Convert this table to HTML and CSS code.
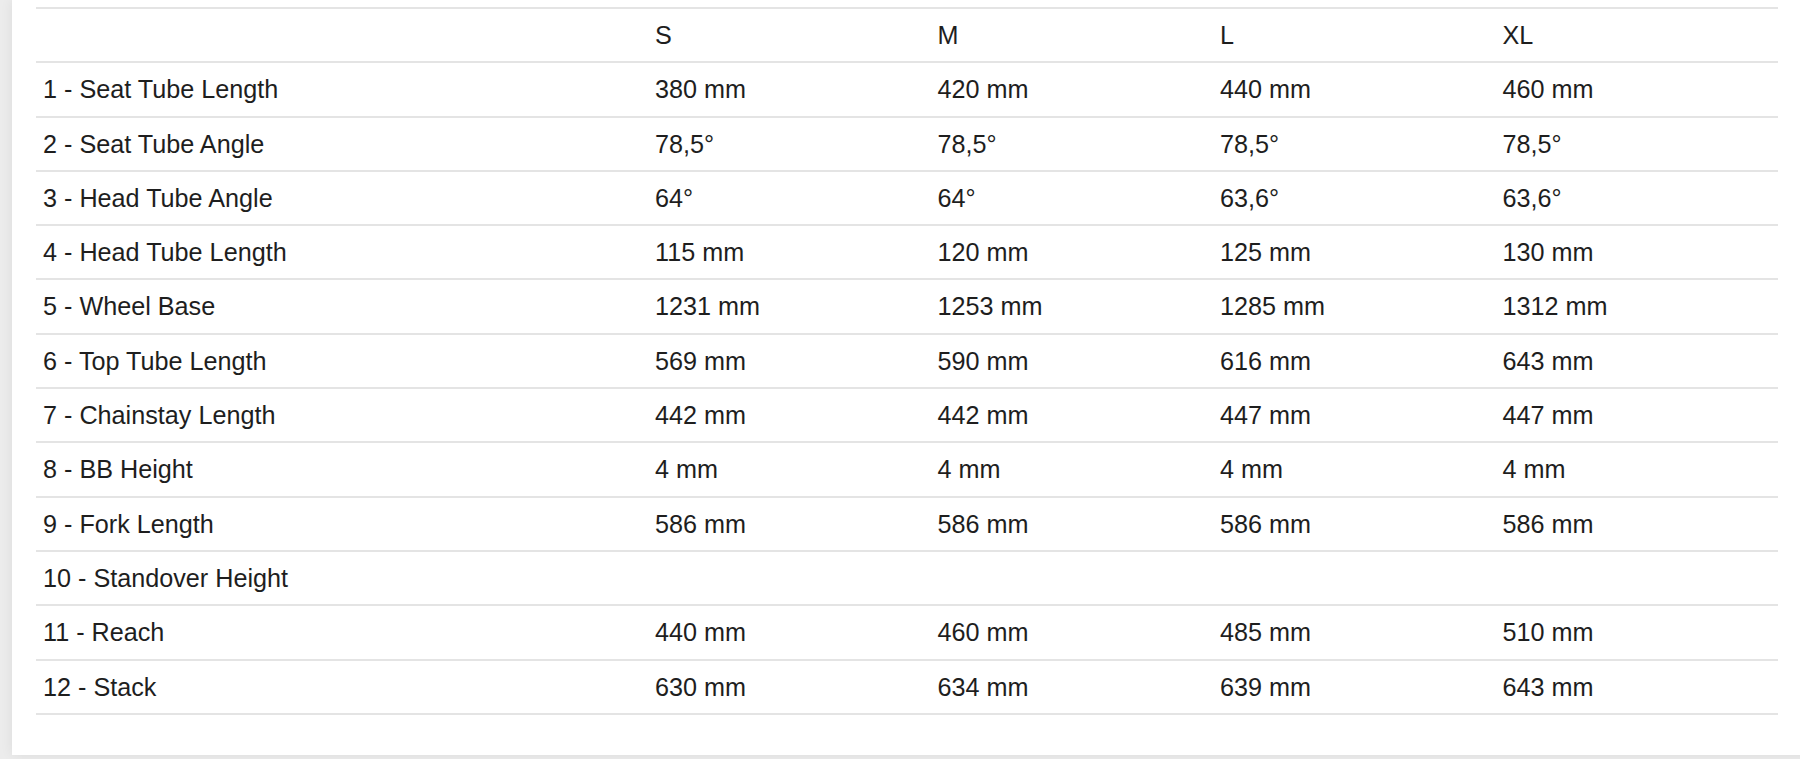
FILE: index.html
```html
<!DOCTYPE html>
<html>
<head>
<meta charset="utf-8">
<link rel="stylesheet" href="styles.css">
</head>
<body>
<div class="card">
  <table class="geo">
    <colgroup>
      <col class="c-label">
      <col class="c-size"><col class="c-size"><col class="c-size"><col class="c-size">
    </colgroup>
    <thead>
      <tr><th></th><th>S</th><th>M</th><th>L</th><th>XL</th></tr>
    </thead>
    <tbody>
      <tr><td>1 - Seat Tube Length</td><td>380 mm</td><td>420 mm</td><td>440 mm</td><td>460 mm</td></tr>
      <tr><td>2 - Seat Tube Angle</td><td>78,5°</td><td>78,5°</td><td>78,5°</td><td>78,5°</td></tr>
      <tr><td>3 - Head Tube Angle</td><td>64°</td><td>64°</td><td>63,6°</td><td>63,6°</td></tr>
      <tr><td>4 - Head Tube Length</td><td>115 mm</td><td>120 mm</td><td>125 mm</td><td>130 mm</td></tr>
      <tr><td>5 - Wheel Base</td><td>1231 mm</td><td>1253 mm</td><td>1285 mm</td><td>1312 mm</td></tr>
      <tr><td>6 - Top Tube Length</td><td>569 mm</td><td>590 mm</td><td>616 mm</td><td>643 mm</td></tr>
      <tr><td>7 - Chainstay Length</td><td>442 mm</td><td>442 mm</td><td>447 mm</td><td>447 mm</td></tr>
      <tr><td>8 - BB Height</td><td>4 mm</td><td>4 mm</td><td>4 mm</td><td>4 mm</td></tr>
      <tr><td>9 - Fork Length</td><td>586 mm</td><td>586 mm</td><td>586 mm</td><td>586 mm</td></tr>
      <tr><td>10 - Standover Height</td><td></td><td></td><td></td><td></td></tr>
      <tr><td>11 - Reach</td><td>440 mm</td><td>460 mm</td><td>485 mm</td><td>510 mm</td></tr>
      <tr><td>12 - Stack</td><td>630 mm</td><td>634 mm</td><td>639 mm</td><td>643 mm</td></tr>
    </tbody>
  </table>
</div>
</body>
</html>
```
FILE: styles.css
```css
html, body {
  margin: 0;
  padding: 0;
  background: #ececec;
  height: 759px;
  overflow: hidden;
}
body {
  font-family: "Liberation Sans", Arial, Helvetica, sans-serif;
  color: #1e1e1e;
}
.card {
  margin-left: 12px;
  width: 1820px;
  height: 755px;
  box-sizing: border-box;
  background: #fff;
  padding: 7px 0 0 24px;
  box-shadow: 0 0 12px rgba(0, 0, 0, 0.07);
}
.geo {
  width: 1742px;
  table-layout: fixed;
  border-collapse: separate;
  border-spacing: 0;
  font-size: 25.2px;
}
.c-label { width: 612px; }
.c-size { width: 282.5px; }
.geo th, .geo td {
  font-weight: normal;
  text-align: left;
  padding: 0 0 0 7px;
  height: 52.3px;
  line-height: 52.3px;
  border-bottom: 2px solid #e4e4e4;
  white-space: nowrap;
}
.geo thead th {
  border-top: 2px solid #e4e4e4;
}
```
